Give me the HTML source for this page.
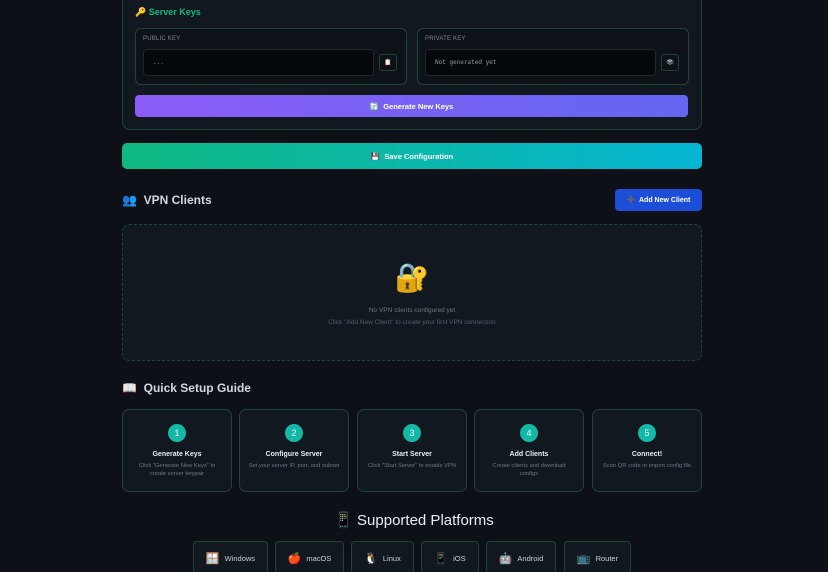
<!DOCTYPE html>
<html><head><meta charset="utf-8"><style>
*{box-sizing:border-box;margin:0;padding:0}
html,body{width:828px;height:572px;overflow:hidden}
body{background:#0d1117;font-family:"Liberation Sans","DejaVu Sans",sans-serif;color:#e6edf3;position:relative}
.a{position:absolute}
.card{background:#111820;border:1px solid #1d4435;border-radius:8px}
.kb{background:#0d1218;border:1px solid #1d4435;border-radius:6px}
.lbl{font-size:6px;color:#7d8590;letter-spacing:.2px}
.inp{background:#05080b;border:1px solid #21262d;border-radius:4px;font-family:"DejaVu Sans Mono","Liberation Mono",monospace;font-size:6px;color:#8b949e;padding-left:9px;display:flex;align-items:center}
.ib{background:#0d1218;border:1px solid #1d4435;border-radius:3px;font-size:6px;display:flex;align-items:center;justify-content:center}
.btn{border-radius:4px;color:#fff;font-size:7.5px;font-weight:bold;display:flex;align-items:center;justify-content:center}
.step{top:409px;height:83px;width:110px;background:#111820;border:1px solid #1d4435;border-radius:7px;text-align:center}
.num{width:18px;height:18px;border-radius:50%;background:#14b8a6;color:#e6fff9;font-size:9px;line-height:18px;margin:14px auto 0}
.st{font-size:7px;font-weight:bold;margin-top:9px}
.sd{font-size:5.8px;color:#6e7681;margin-top:4px;line-height:8px;padding:0 11px}
.pf{top:541px;height:34px;background:#111820;border:1px solid #1d4435;border-radius:4px;font-size:7.5px;color:#c9d1d9;display:flex;align-items:center;justify-content:center;gap:5px}
.pf span{font-size:11px}
h2{font-size:12px;font-weight:bold;color:#d0d7de}
</style></head><body>
<div class="a card" style="left:122px;top:-10px;width:580px;height:140px"></div>
<div class="a" style="left:135px;top:7px;font-size:9px;color:#10b981;font-weight:bold">🔑 Server Keys</div>
<div class="a kb" style="left:135px;top:28px;width:272px;height:57px"></div>
<div class="a lbl" style="left:143px;top:36px">PUBLIC KEY</div>
<div class="a inp" style="left:143px;top:49px;width:231px;height:27px;color:#10b981">...</div>
<div class="a ib" style="left:379px;top:54px;width:18px;height:17px">📋</div>
<div class="a kb" style="left:417px;top:28px;width:272px;height:57px"></div>
<div class="a lbl" style="left:425px;top:36px">PRIVATE KEY</div>
<div class="a inp" style="left:425px;top:49px;width:231px;height:27px">Not generated yet</div>
<div class="a ib" style="left:661px;top:54px;width:18px;height:17px">👁</div>
<div class="a btn" style="left:135px;top:95px;width:553px;height:22px;background:linear-gradient(90deg,#8b5cf6,#6366f1)">🔄&nbsp; Generate New Keys</div>
<div class="a btn" style="left:122px;top:143px;width:580px;height:26px;border-radius:5px;background:linear-gradient(90deg,#10b981,#06b6d4)">💾&nbsp; Save Configuration</div>
<div class="a" style="left:122px;top:193px"><h2>👥&nbsp; VPN Clients</h2></div>
<div class="a btn" style="left:615px;top:189px;width:87px;height:22px;background:#1d4ed8;font-size:7px">➕&nbsp; Add New Client</div>
<div class="a" style="left:122px;top:224px;width:580px;height:137px;border:1px dashed #1d4435;border-radius:7px;background:#111820;text-align:center">
<div style="font-size:28px;margin-top:36px;line-height:34px">🔐</div>
<div style="font-size:6.5px;color:#6e7681;margin-top:12px">No VPN clients configured yet</div>
<div style="font-size:6.5px;color:#545d68;margin-top:5px">Click "Add New Client" to create your first VPN connection</div>
</div>
<div class="a" style="left:122px;top:381px"><h2>📖&nbsp; Quick Setup Guide</h2></div>
<div class="a step" style="left:122px"><div class="num">1</div><div class="st">Generate Keys</div><div class="sd">Click "Generate New Keys" to create server keypair</div></div>
<div class="a step" style="left:239px"><div class="num">2</div><div class="st">Configure Server</div><div class="sd" style="padding:0 4px">Set your server IP, port, and subnet</div></div>
<div class="a step" style="left:357px"><div class="num">3</div><div class="st">Start Server</div><div class="sd" style="padding:0 4px">Click "Start Server" to enable VPN</div></div>
<div class="a step" style="left:474px"><div class="num">4</div><div class="st">Add Clients</div><div class="sd">Create clients and download configs</div></div>
<div class="a step" style="left:592px"><div class="num">5</div><div class="st">Connect!</div><div class="sd" style="padding:0 3px">Scan QR code or import config file</div></div>
<div class="a" style="left:0;width:828px;top:511px;text-align:center;font-size:15px;color:#e6edf3">📱 Supported Platforms</div>
<div class="a pf" style="left:193px;width:75px"><span>🪟</span>Windows</div>
<div class="a pf" style="left:275px;width:69px"><span>🍎</span>macOS</div>
<div class="a pf" style="left:351px;width:63px"><span>🐧</span>Linux</div>
<div class="a pf" style="left:421px;width:58px"><span>📱</span>iOS</div>
<div class="a pf" style="left:486px;width:70px"><span>🤖</span>Android</div>
<div class="a pf" style="left:564px;width:67px"><span>📺</span>Router</div>
</body></html>
